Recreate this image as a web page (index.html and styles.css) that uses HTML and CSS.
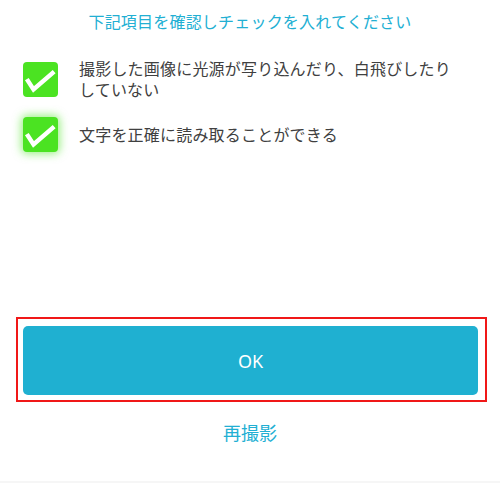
FILE: index.html
```html
<!DOCTYPE html>
<html lang="ja">
<head>
<meta charset="utf-8">
<link rel="stylesheet" href="styles.css">
</head>
<body>
<div class="page">
  <h1 class="title">下記項目を確認しチェックを入れてください</h1>
  <ul class="checklist">
    <li class="item">
      <span class="box">
        <svg viewBox="0 0 35 35" width="35" height="35"><path d="M5 19 L10.5 27.5 L29.5 11" fill="none" stroke="#fff" stroke-width="4.4" stroke-linecap="square" stroke-linejoin="miter"/></svg>
      </span>
      <span class="label">撮影した画像に光源が写り込んだり、白飛びしたりしていない</span>
    </li>
    <li class="item">
      <span class="box glow">
        <svg viewBox="0 0 35 35" width="35" height="35"><path d="M5 19 L10.5 27.5 L29.5 11" fill="none" stroke="#fff" stroke-width="4.4" stroke-linecap="square" stroke-linejoin="miter"/></svg>
      </span>
      <span class="label">文字を正確に読み取ることができる</span>
    </li>
  </ul>
  <div class="spacer"></div>
  <div class="highlight">
    <button class="ok">OK</button>
  </div>
  <a class="retake">再撮影</a>
  <div class="bottom-strip"></div>
</div>
</body>
</html>
```
FILE: styles.css
```css
* { box-sizing: border-box; }
html, body { margin: 0; padding: 0; background: #fff; }
body {
  font-family: "Noto Sans CJK JP", "Noto Sans", sans-serif;
}
.page {
  height: 483px;
  display: flex;
  flex-direction: column;
}
.title {
  margin: 10px 0 0;
  font-size: 16px;
  font-weight: 400;
  line-height: 22px;
  letter-spacing: 0.2px;
  color: #22afd3;
  text-align: center;
}
.checklist {
  list-style: none;
  margin: 26px 0 0;
  padding: 0;
  display: flex;
  flex-direction: column;
  gap: 17px;
}
.item {
  display: flex;
  align-items: center;
  gap: 21px;
  padding: 0 40px 0 23px;
}
.box {
  flex: none;
  width: 35px;
  height: 35px;
  border-radius: 4px;
  background: #4be322;
  display: block;
}
.box svg { display: block; }
.box.glow {
  box-shadow: 0 0 9px 2px rgba(75, 227, 34, 0.55);
}
.label {
  font-size: 16px;
  line-height: 21px;
  letter-spacing: 0.2px;
  color: #404040;
}
.spacer { flex: 1; }
.highlight {
  margin: 0 13px 0 16px;
  border: 2px solid #f01818;
  padding: 7px 7px 5px 5px;
}
.ok {
  display: block;
  width: 100%;
  height: 69px;
  border: 0;
  border-radius: 5px;
  background: #1fb0d1;
  color: #fff;
  font-family: "Noto Sans", sans-serif;
  font-size: 18px;
  padding: 0;
}
.retake {
  display: block;
  margin-top: 18px;
  margin-bottom: 37px;
  text-align: center;
  font-size: 18px;
  line-height: 24px;
  color: #22afd3;
}
.bottom-strip {
  height: 2px;
  background: #f6f6f6;
}
```
